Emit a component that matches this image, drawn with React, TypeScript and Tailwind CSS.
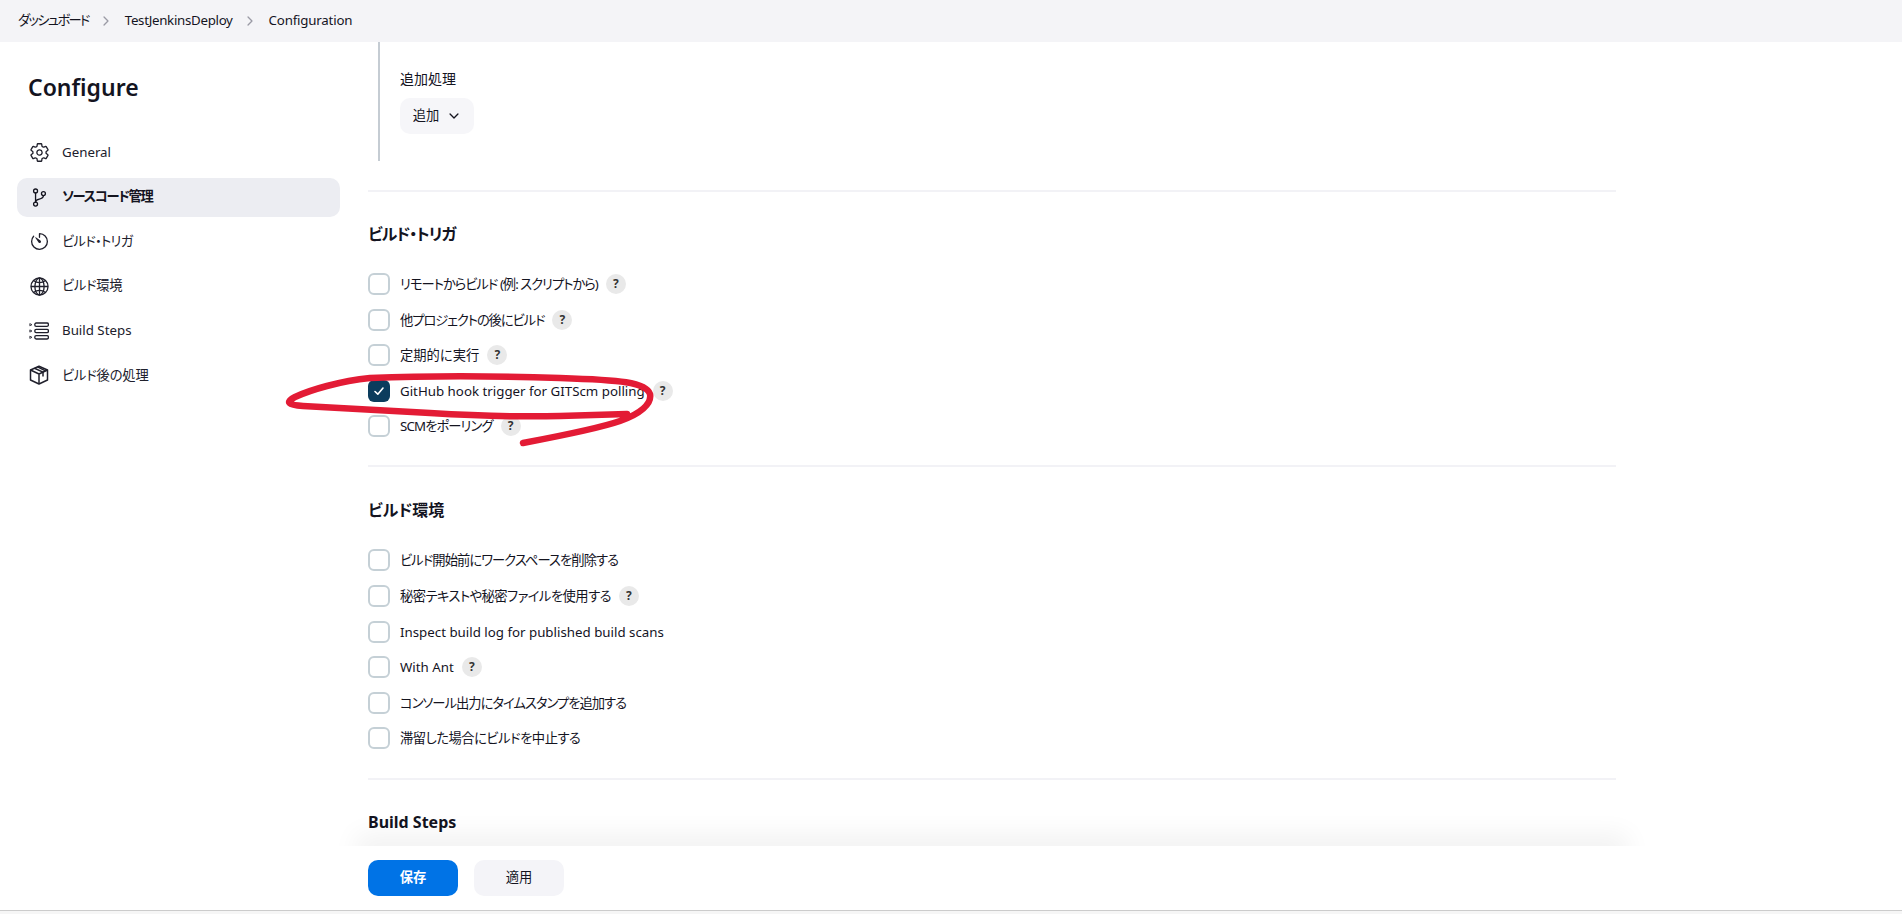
import React from "react";
import { IoSettingsOutline, IoGitBranchOutline, IoTimerOutline, IoGlobeOutline, IoChevronDown, IoChevronForward } from "react-icons/io5";

const font = "font-['Noto_Sans','Noto_Sans_CJK_JP',sans-serif] [font-feature-settings:'palt']";

function StepsIcon() {
  return (
    <svg width="20" height="20" viewBox="0 0 20 20" fill="none" stroke="currentColor" strokeWidth="1.3">
      <path d="M0.8 2.6 L3 3.7 L0.8 4.8Z M0.8 8.9 L3 10 L0.8 11.1Z M0.8 15.2 L3 16.3 L0.8 17.4Z" strokeWidth="0.8" />
      <rect x="5.8" y="2" width="13.6" height="3.4" rx="1.4" />
      <rect x="5.8" y="8.3" width="13.6" height="3.4" rx="1.4" />
      <rect x="5.8" y="14.6" width="13.6" height="3.4" rx="1.4" />
    </svg>
  );
}

function BoxIcon() {
  return (
    <svg width="20" height="20" viewBox="0 0 20 20" fill="none" stroke="currentColor" strokeWidth="1.5" strokeLinejoin="round">
      <path d="M10 1.2 L18.5 5 V15 L10 19 L1.5 15 V5 Z" />
      <path d="M1.5 5 L10 9 L18.5 5 M10 9 V19" />
      <path d="M5.5 3.2 L14 7.1 V11.5 M8.5 1.9 L16.5 5.9" />
    </svg>
  );
}

const nav: { icon: React.ReactNode; label: string; active?: boolean; cls?: string }[] = [
  { icon: <IoSettingsOutline size={21} />, label: "General" },
  { icon: <IoGitBranchOutline size={21} />, label: "ソースコード管理", active: true, cls: "tracking-[-1.3px]" },
  { icon: <IoTimerOutline size={21} />, label: "ビルド・トリガ", cls: "tracking-[-0.7px]" },
  { icon: <IoGlobeOutline size={21} />, label: "ビルド環境", cls: "tracking-[-0.3px]" },
  { icon: <StepsIcon />, label: "Build Steps" },
  { icon: <BoxIcon />, label: "ビルド後の処理", cls: "tracking-[-0.2px]" },
];

type RowData = { label: string; help?: boolean; checked?: boolean; cls?: string };

function Row({ label, help, checked, cls }: RowData) {
  return (
    <div className="flex items-center h-[22px]">
      <span
        className={
          checked
            ? "w-[22px] h-[22px] rounded-[6px] bg-[#0b3c5d] flex items-center justify-center shrink-0"
            : "w-[22px] h-[22px] rounded-[6px] border-2 border-[#c5d0d6] bg-white shrink-0"
        }
      >
        {checked && (
          <svg width="12" height="12" viewBox="0 0 12 12" fill="none" stroke="white" strokeWidth="1.6" strokeLinecap="round" strokeLinejoin="round">
            <path d="M2 6.5 L4.8 9.2 L10 3" />
          </svg>
        )}
      </span>
      <span className={`ml-[10px] mt-[2px] text-[13.3px] text-[#14141f] whitespace-nowrap ${cls ?? ""}`}>{label}</span>
      {help && (
        <span className="ml-[8px] w-5 h-5 rounded-full bg-[#e9e9e9] text-[#333] text-[12px] font-bold flex items-center justify-center">?</span>
      )}
    </div>
  );
}

function Section({ title, rows, titleCls }: { title: string; rows: RowData[]; titleCls?: string }) {
  return (
    <section>
      <h2 className={`text-[16px] leading-[24px] font-bold text-[#14141f] whitespace-nowrap ${titleCls ?? ""}`}>{title}</h2>
      <div className="mt-[27px] flex flex-col gap-[13.6px]">
        {rows.map((r) => (
          <Row key={r.label} {...r} />
        ))}
      </div>
    </section>
  );
}

export default function App() {
  return (
    <div className={`${font} relative h-[914px] overflow-hidden bg-white flex flex-col text-[#14141f]`}>
      <header className="h-[42px] shrink-0 bg-[#f4f4f7] flex items-center pl-[18px] text-[13.3px]">
        <span className="tracking-[-1.7px]">ダッシュボード</span>
        <IoChevronForward className="ml-[10px] mr-[12px] text-[#9a9aa5]" size={14} />
        <span className="tracking-[-0.3px]">TestJenkinsDeploy</span>
        <IoChevronForward className="ml-[10px] mr-[12px] text-[#9a9aa5]" size={14} />
        <span className="tracking-[-0.2px]">Configuration</span>
      </header>

      <div className="flex flex-1 min-h-0">
        <aside className="w-[368px] shrink-0 pl-[17px] pt-[29px]">
          <h1 className="pl-[11px] text-[23px] leading-[32px] font-semibold">Configure</h1>
          <nav className="mt-[30px] w-[323px] flex flex-col gap-[5.6px]">
            {nav.map((n) => (
              <div
                key={n.label}
                className={
                  n.active
                    ? "h-[39px] rounded-[10px] bg-[#ecedf2] flex items-center pl-[11px] text-[13.3px] font-semibold"
                    : "h-[39px] rounded-[10px] flex items-center pl-[11px] text-[13.3px] text-[#20202c]"
                }
              >
                <span className="w-[22px] flex justify-center">{n.icon}</span>
                <span className={`ml-[12px] ${n.cls ?? ""}`}>{n.label}</span>
              </div>
            ))}
          </nav>
        </aside>

        <main className="w-[1248px] shrink-0">
          <div className="ml-[10px] h-[119px] border-l-2 border-[#c5ccd3] pl-[20px] pt-[26px]">
            <div className="text-[14px] leading-[22px]">追加処理</div>
            <button className="mt-[8px] h-[36px] w-[74px] rounded-[10px] bg-[#f6f6f9] flex items-center justify-center gap-[8px] text-[13.3px]">
              追加
              <IoChevronDown size={14} />
            </button>
          </div>
          <hr className="mt-[29px] border-0 h-[2px] bg-[#f2f2f6]" />
          <div className="mt-[30px]">
            <Section
              title="ビルド・トリガ"
              titleCls="tracking-[-1px]"
              rows={[
                { label: "リモートからビルド (例: スクリプトから)", help: true, cls: "tracking-[-1px]" },
                { label: "他プロジェクトの後にビルド", help: true, cls: "tracking-[-1.1px]" },
                { label: "定期的に実行", help: true },
                { label: "GitHub hook trigger for GITScm polling", help: true, checked: true },
                { label: "SCMをポーリング", help: true, cls: "tracking-[-0.9px]" },
              ]}
            />
          </div>
          <hr className="mt-[28px] border-0 h-[2px] bg-[#f2f2f6]" />
          <div className="mt-[31px]">
            <Section
              title="ビルド環境"
              rows={[
                { label: "ビルド開始前にワークスペースを削除する", cls: "tracking-[-0.95px]" },
                { label: "秘密テキストや秘密ファイルを使用する", help: true, cls: "tracking-[-0.55px]" },
                { label: "Inspect build log for published build scans" },
                { label: "With Ant", help: true },
                { label: "コンソール出力にタイムスタンプを追加する", cls: "tracking-[-1px]" },
                { label: "滞留した場合にビルドを中止する", cls: "tracking-[-0.5px]" },
              ]}
            />
          </div>
          <hr className="mt-[29px] border-0 h-[2px] bg-[#f2f2f6]" />
          <h2 className="mt-[30px] text-[16px] leading-[24px] font-bold">Build Steps</h2>
        </main>
      </div>

      {/* sticky save bar lying over the page */}
      <div className="absolute left-0 right-0 bottom-0 h-[68px] bg-white">
        <div className="absolute left-[368px] w-[1248px] top-0 h-[8px] shadow-[0_0_26px_12px_rgba(0,0,0,0.055)]" />
        <div className="absolute inset-0 bg-white flex flex-col">
          <div className="flex-1 flex gap-[16px] pl-[368px] pt-[14px]">
            <button className="w-[90px] h-[36px] rounded-[10px] bg-[#0073e6] text-white text-[13.3px] font-bold">保存</button>
            <button className="w-[90px] h-[36px] rounded-[10px] bg-[#f4f4f8] text-[13.3px]">適用</button>
          </div>
          <div className="h-[4px] border-t border-[#cccccc] bg-[#f6f6f6]" />
        </div>
      </div>

      {/* hand-drawn red annotation */}
      <svg className="absolute left-0 top-0 pointer-events-none" width="1902" height="914" fill="none">
        <path
          d="M523 443 C560 436 600 428 620 421 C640 414 652 404 650 394 C646 382 620 380 560 378 C500 376 420 376 370 378 C340 381 310 390 295 397 C285 402 288 405 303 406 C340 408 380 410 430 413 C480 416 520 417 560 416 L627 414"
          stroke="#e31b35"
          strokeWidth="6.5"
          strokeLinecap="round"
          strokeLinejoin="round"
        />
      </svg>
    </div>
  );
}
